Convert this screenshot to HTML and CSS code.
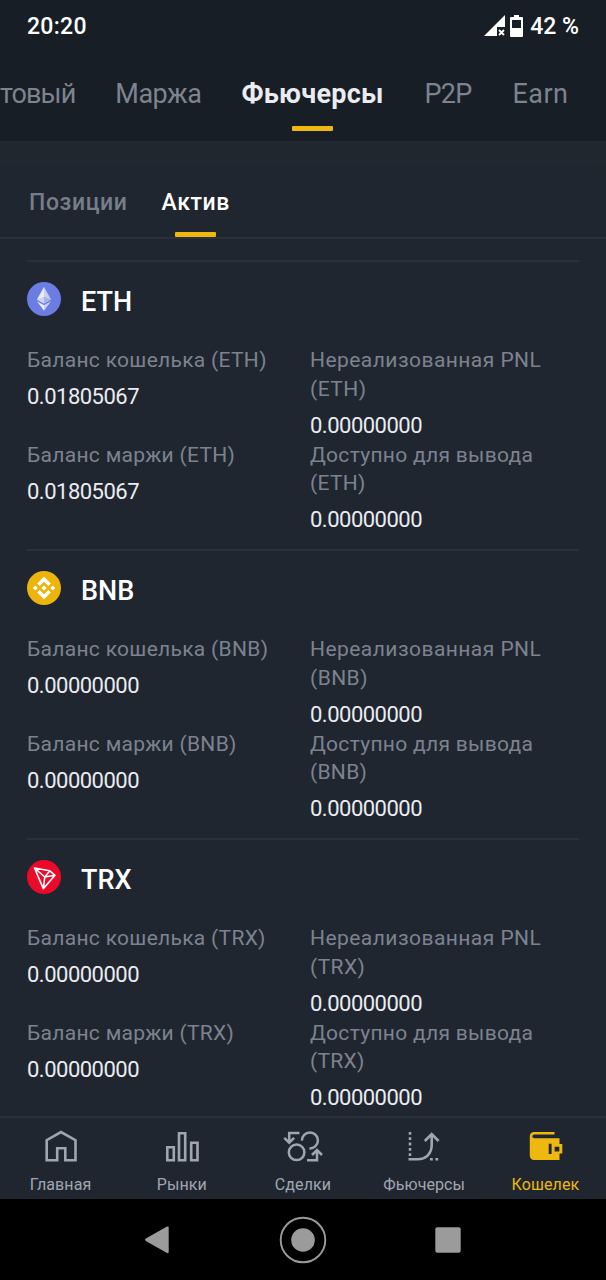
FILE: index.html
```html
<!DOCTYPE html>
<html lang="ru">
<head>
  <meta charset="UTF-8">
  <meta name="viewport" content="width=device-width, initial-scale=1">
  <title>Кошелек</title>
  <link rel="stylesheet" href="styles.css">
</head>
<body>
  <div class="app">
    <header class="header">
      <div class="status-bar">
        <span class="time">20:20</span>
        <div class="status-right">
          <svg class="signal" width="22" height="22" viewBox="0 0 22 22">
            <path d="M21 0V12H13V21H0Z" fill="#fff"/>
            <path d="M15 15l5 5M20 15l-5 5" stroke="#fff" stroke-width="1.8"/>
          </svg>
          <svg class="battery" width="13" height="22" viewBox="0 0 13 22">
            <path fill-rule="evenodd" d="M4 0h5v2h3a1 1 0 0 1 1 1v18a1 1 0 0 1-1 1H1a1 1 0 0 1-1-1V3a1 1 0 0 1 1-1h3zM2 5v8h9V5z" fill="#fff"/>
          </svg>
          <span class="percent">42 %</span>
        </div>
      </div>

      <!-- Wallet types, scrolled to Futures -->
      <nav class="wallet-tabs">
        <a class="spot">товый</a>
        <a class="margin">Маржа</a>
        <a class="futures active">Фьючерсы</a>
        <a class="p2p">P2P</a>
        <a class="earn">Earn</a>
      </nav>
    </header>

    <nav class="sub-tabs">
      <a class="positions">Позиции</a>
      <a class="assets active">Актив</a>
    </nav>

    <main class="asset-list">
      <section class="asset">
        <h2 class="asset-title">
          <svg width="34" height="34" viewBox="0 0 34 34">
            <circle cx="17" cy="17" r="17" fill="#6b7de3"/>
            <path d="M17 5L10 17.5L17 21.5Z" fill="#e9edfb"/>
            <path d="M17 5L24 17.5L17 21.5Z" fill="#c9cfef"/>
            <path d="M17 14.5L10 17.5L17 21.5Z" fill="#cdd3ee"/>
            <path d="M17 14.5L24 17.5L17 21.5Z" fill="#aab3df"/>
            <path d="M10 19.2L17 23.2V28.7Z" fill="#e9edfb"/>
            <path d="M24 19.2L17 23.2V28.7Z" fill="#c9cfef"/>
          </svg>
          <span>ETH</span>
        </h2>
        <div class="asset-grid">
          <div class="item">
            <div class="label">Баланс кошелька (ETH)</div>
            <div class="value">0.01805067</div>
          </div>
          <div class="item">
            <div class="label pnl">Нереализованная PNL<br>(ETH)</div>
            <div class="value">0.00000000</div>
          </div>
          <div class="item">
            <div class="label">Баланс маржи (ETH)</div>
            <div class="value">0.01805067</div>
          </div>
          <div class="item">
            <div class="label">Доступно для вывода<br>(ETH)</div>
            <div class="value">0.00000000</div>
          </div>
        </div>
      </section>

      <section class="asset">
        <h2 class="asset-title">
          <svg width="34" height="34" viewBox="0 0 34 34">
            <circle cx="17" cy="17" r="17" fill="#edb40c"/>
            <path d="M17 5.8L23.8 12.6L21.3 15.1L17 10.8L12.7 15.1L10.2 12.6Z" fill="#fff"/>
            <path d="M17 28.2L23.8 21.4L21.3 18.9L17 23.2L12.7 18.9L10.2 21.4Z" fill="#fff"/>
            <path d="M17 14.4L19.6 17L17 19.6L14.4 17ZM8.3 14.5L10.8 17L8.3 19.5L5.8 17ZM25.7 14.5L28.2 17L25.7 19.5L23.2 17Z" fill="#fff"/>
          </svg>
          <span>BNB</span>
        </h2>
        <div class="asset-grid">
          <div class="item">
            <div class="label">Баланс кошелька (BNB)</div>
            <div class="value">0.00000000</div>
          </div>
          <div class="item">
            <div class="label pnl">Нереализованная PNL<br>(BNB)</div>
            <div class="value">0.00000000</div>
          </div>
          <div class="item">
            <div class="label">Баланс маржи (BNB)</div>
            <div class="value">0.00000000</div>
          </div>
          <div class="item">
            <div class="label">Доступно для вывода<br>(BNB)</div>
            <div class="value">0.00000000</div>
          </div>
        </div>
      </section>

      <section class="asset">
        <h2 class="asset-title">
          <svg width="34" height="34" viewBox="0 0 34 34">
            <circle cx="17" cy="17" r="17" fill="#eb0a29"/>
            <path d="M7.5 8L22.8 10.8L28 15.3L16.3 28.6ZM7.5 8L17.8 17L28 15.3M22.8 10.8L17.8 17L16.3 28.6" fill="none" stroke="#fff" stroke-width="1.6" stroke-linejoin="round"/>
          </svg>
          <span>TRX</span>
        </h2>
        <div class="asset-grid">
          <div class="item">
            <div class="label">Баланс кошелька (TRX)</div>
            <div class="value">0.00000000</div>
          </div>
          <div class="item">
            <div class="label pnl">Нереализованная PNL<br>(TRX)</div>
            <div class="value">0.00000000</div>
          </div>
          <div class="item">
            <div class="label">Баланс маржи (TRX)</div>
            <div class="value">0.00000000</div>
          </div>
          <div class="item">
            <div class="label">Доступно для вывода<br>(TRX)</div>
            <div class="value">0.00000000</div>
          </div>
        </div>
      </section>
    </main>

    <nav class="bottom-nav">
      <a>
        <svg width="40" height="36" viewBox="0 0 40 36" fill="none" stroke="currentColor" stroke-width="2.6">
          <path d="M5.7 32.2V12.2L20 4L34.5 12.2V32.2H24.3V20.3H16.2V32.2Z"/>
        </svg>
        <span>Главная</span>
      </a>
      <a>
        <svg width="40" height="36" viewBox="0 0 40 36" fill="none" stroke="currentColor" stroke-width="2.6">
          <path d="M5.3 19.3H11.8V32.3H5.3ZM17 5.3H23.2V32.3H17ZM29.2 14.8H35.5V32.3H29.2Z"/>
        </svg>
        <span>Рынки</span>
      </a>
      <a>
        <svg width="40" height="36" viewBox="0 0 40 36" fill="none" stroke="currentColor" stroke-width="2.5">
          <circle cx="13.6" cy="24.3" r="7.8"/>
          <path d="M18.9 12.6A8 8 0 1 1 26.4 20.4"/>
          <path d="M16.5 5.1H6.2V14M1.3 9.8L6.2 14.7L11.1 9.8"/>
          <path d="M24 32.3H34V22.5M29 27L34 22L39 27"/>
        </svg>
        <span>Сделки</span>
      </a>
      <a>
        <svg width="40" height="36" viewBox="0 0 40 36" fill="none" stroke="currentColor" stroke-width="2.6">
          <path d="M4.5 31.3H13.5C22 31.3 27.7 25.5 27.7 17V6M20.8 13L27.7 6L34.6 13"/>
          <path d="M6 4V29" stroke-dasharray="2.8 2.5"/>
          <path d="M26 31.3H34.2" stroke-dasharray="2.8 2.6"/>
        </svg>
        <span>Фьючерсы</span>
      </a>
      <a class="active">
        <svg width="40" height="36" viewBox="0 0 40 36" fill="currentColor">
          <path fill-rule="evenodd" d="M9 4H29.5V6.4H9.2A1.9 1.9 0 0 0 9.2 10.2H34.5V16H37.3V25.6H34.5V32H9A4.2 4.2 0 0 1 4.8 27.8V8.2A4.2 4.2 0 0 1 9 4ZM23.7 15.8V26H26.6V15.8ZM29.6 18.7V23.5H34.3V18.7Z"/>
        </svg>
        <span>Кошелек</span>
      </a>
    </nav>

    <!-- System navigation -->
    <footer class="system-bar">
      <svg width="50" height="50" viewBox="0 0 50 50" fill="#9b9b9b">
        <path d="M12.8 23.5L34 11.6Q35.7 11 35.7 12.6V37Q35.7 38.6 34 38L12.8 26Q11 24.7 12.8 23.5Z"/>
      </svg>
      <svg width="50" height="50" viewBox="0 0 50 50" fill="#9b9b9b">
        <circle cx="25" cy="25" r="22.3" fill="none" stroke="#9b9b9b" stroke-width="1.9"/>
        <circle cx="25" cy="25" r="11.8"/>
      </svg>
      <svg width="50" height="50" viewBox="0 0 50 50" fill="#9b9b9b">
        <rect x="12.3" y="12.3" width="25.4" height="25.4" rx="2"/>
      </svg>
    </footer>
  </div>
</body>
</html>
```
FILE: styles.css
```css
* {
  box-sizing: border-box;
}
body {
  margin: 0;
  background: #202630;
  font-family: Roboto, sans-serif;
}
.app {
  display: flex;
  flex-direction: column;
  width: 606px;
  height: 1280px;
  overflow: hidden;
}

/* Header */
.header {
  flex: none;
  height: 141px;
  background: #181e25;
}
.status-bar {
  display: flex;
  justify-content: space-between;
  align-items: center;
  height: 52px;
  padding: 0 27px;
  color: #fff;
  font-size: 23px;
  font-weight: 500;
}
.time {
  letter-spacing: 0.3px;
}
.status-right {
  display: flex;
  align-items: center;
}
.battery {
  margin: 0 7px 0 4px;
}
.wallet-tabs {
  display: flex;
  gap: 40px;
  height: 89px;
  line-height: 85px;
  font-size: 27px;
  letter-spacing: -0.5px;
  color: #7d8490;
  white-space: nowrap;
}
.wallet-tabs .spot {
  letter-spacing: -0.9px;
}
.wallet-tabs .active {
  color: #eaecf1;
  font-weight: 700;
  letter-spacing: 0.25px;
}
.wallet-tabs .p2p {
  margin-left: 1px;
  letter-spacing: -0.8px;
}
.wallet-tabs .earn {
  margin-left: 1px;
  letter-spacing: 0.5px;
}
.wallet-tabs .active,
.sub-tabs .active {
  position: relative;
}
.wallet-tabs .active::after,
.sub-tabs .active::after {
  content: "";
  position: absolute;
  left: 50%;
  bottom: 10px;
  width: 41px;
  height: 5px;
  margin-left: -20.5px;
  border-radius: 1px;
  background: #efb80f;
}

/* Positions / Assets */
.sub-tabs {
  flex: none;
  display: flex;
  gap: 34px;
  height: 98px;
  padding: 22px 29px 0;
  border-bottom: 2px solid #2b313b;
  background: linear-gradient(#20272e 24px, #202630 24px);
  line-height: 80px;
  font-size: 23px;
  font-weight: 500;
  letter-spacing: 0.6px;
  color: #777e8a;
}
.sub-tabs .active {
  color: #fff;
}
.sub-tabs .active::after {
  bottom: 0;
}

/* Asset list */
.asset-list {
  flex: 1;
  min-height: 0;
  overflow: hidden;
  padding: 21px 27px 0;
}
.asset {
  height: 289px;
  border-top: 2px solid #2b313b;
}
.asset-title {
  display: flex;
  align-items: center;
  gap: 20px;
  height: 34px;
  margin: 20px 0 30px;
  color: #fff;
  font-size: 27px;
  font-weight: 500;
}
.asset-title span {
  padding-top: 5px;
}
.asset-grid {
  display: grid;
  grid-template-columns: 283px 1fr;
  grid-auto-rows: 94.5px;
}
.label {
  line-height: 28.5px;
  font-size: 21px;
  letter-spacing: 0.3px;
  color: #7c838f;
  white-space: nowrap;
}
.label.pnl {
  letter-spacing: 0.45px;
}
.value {
  margin-top: 8.5px;
  line-height: 28.5px;
  font-size: 22px;
  letter-spacing: -0.5px;
  color: #eaecf1;
}

/* Bottom navigation */
.bottom-nav {
  flex: none;
  display: grid;
  grid-template-columns: repeat(5, 1fr);
  height: 83px;
  padding-top: 10px;
  border-top: 2px solid #2b313b;
  color: #a0a6b1;
  font-size: 16px;
  letter-spacing: 0.1px;
}
.bottom-nav a {
  display: flex;
  flex-direction: column;
  align-items: center;
}
.bottom-nav span {
  margin-top: 11px;
  line-height: 20px;
}
.bottom-nav .active {
  color: #efb80f;
}

.system-bar {
  flex: none;
  display: flex;
  justify-content: center;
  align-items: center;
  gap: 95px;
  height: 81px;
  background: #000;
}
```
